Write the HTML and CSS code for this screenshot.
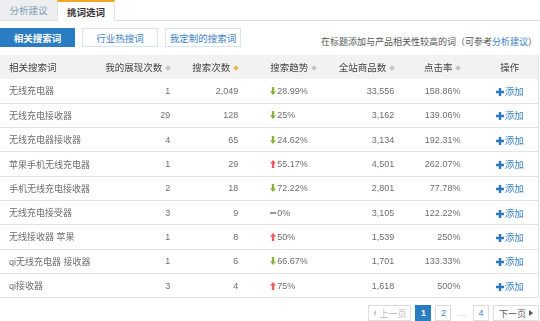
FILE: index.html
```html
<!DOCTYPE html>
<html lang="zh-CN">
<head>
  <meta charset="UTF-8" />
  <title>挑词选词</title>
  <link rel="stylesheet" href="styles.css">
</head>
<body>

  <!-- Tabs -->
  <div class="tabs">
    <div class="tab">分析建议</div>
    <div class="tab active">挑词选词</div>
  </div>

  <!-- Filter buttons -->
  <div class="toolbar">
    <div class="btn-group">
      <span class="btn btn-primary">相关搜索词</span>
      <span class="btn">行业热搜词</span>
      <span class="btn">我定制的搜索词</span>
    </div>
    <div class="hint">在标题添加与产品相关性较高的词（可参考<a class="link">分析建议</a>）</div>
  </div>

  <table class="word-table">
    <colgroup>
      <col style="width:100px">
      <col style="width:76px">
      <col style="width:68px">
      <col style="width:90px">
      <col style="width:66px">
      <col style="width:81px">
      <col style="width:57px">
    </colgroup>
    <thead>
      <tr>
        <th class="c-word">相关搜索词</th>
        <th class="c-num">我的展现次数<i class="sort"></i></th>
        <th class="c-num">搜索次数<i class="sort on"></i></th>
        <th class="c-trend">搜索趋势<i class="sort"></i></th>
        <th class="c-num">全站商品数<i class="sort"></i></th>
        <th class="c-rate">点击率<i class="sort"></i></th>
        <th class="c-op">操作</th>
      </tr>
    </thead>
    <tbody id="rows"></tbody>
  </table>

  <div class="pager">
    <span class="page disabled"><i class="tri tri-left"></i>上一页</span>
    <span class="page current">1</span>
    <span class="page">2</span>
    <span class="dots">...</span>
    <span class="page">4</span>
    <span class="page next">下一页<i class="tri tri-right"></i></span>
  </div>

  <script>
  document.addEventListener("DOMContentLoaded", () => {
    const rows = [
      ["无线充电器", "1", "2,049", "down", "28.99%", "33,556", "158.86%"],
      ["无线充电接收器", "29", "128", "down", "25%", "3,162", "139.06%"],
      ["无线充电器接收器", "4", "65", "down", "24.62%", "3,134", "192.31%"],
      ["苹果手机无线充电器", "1", "29", "up", "55.17%", "4,501", "262.07%"],
      ["手机无线充电接收器", "2", "18", "down", "72.22%", "2,801", "77.78%"],
      ["无线充电接受器", "3", "9", "flat", "0%", "3,105", "122.22%"],
      ["无线接收器 苹果", "1", "8", "up", "50%", "1,539", "250%"],
      ["qi无线充电器 接收器", "1", "6", "down", "66.67%", "1,701", "133.33%"],
      ["qi接收器", "3", "4", "up", "75%", "1,618", "500%"]
    ];

    const arrows = {
      up: '<svg class="arrow" width="6" height="8" viewBox="0 0 6 8"><path d="M3 0 L6 3.5 H4.2 V8 H1.8 V3.5 H0 Z" fill="#ef5b5b"/></svg>',
      down: '<svg class="arrow" width="6" height="8" viewBox="0 0 6 8"><path d="M3 8 L6 4.5 H4.2 V0 H1.8 V4.5 H0 Z" fill="#86b23e"/></svg>',
      flat: '<i class="flat"></i>'
    };

    const plus = '<svg class="plus" width="8" height="8" viewBox="0 0 8 8"><path d="M4 0 V8 M0 4 H8" stroke="#2c78c0" stroke-width="2.4"/></svg>';

    const tbody = document.getElementById("rows");
    tbody.innerHTML = rows.map(r => `
      <tr>
        <td class="c-word">${r[0]}</td>
        <td class="c-num">${r[1]}</td>
        <td class="c-num">${r[2]}</td>
        <td class="c-trend">${arrows[r[3]]}${r[4]}</td>
        <td class="c-num">${r[5]}</td>
        <td class="c-rate">${r[6]}</td>
        <td class="c-op"><a class="add">${plus}添加</a></td>
      </tr>`).join("");
  });
  </script>
</body>
</html>
```

FILE: styles.css
```css
:root {
  --blue: #2b7dc3;
  --link: #3a84c8;
  --text: #6e6e6e;
  --dark: #333333;
  --line: #e3e3e3;
  --head-bg: #f2f2f2;
  --orange: #f5a623;
}

* {
  box-sizing: border-box;
  margin: 0;
  padding: 0;
}

body {
  font-family: "Liberation Sans", "Noto Sans CJK SC", sans-serif;
  font-size: 9px;
  color: var(--text);
  background: #ffffff;
  width: 540px;
  -webkit-font-smoothing: antialiased;
}

/* Tabs */
.tabs {
  display: flex;
  height: 21px;
  border-bottom: 1px solid #dddddd;
}

.tab {
  width: 57px;
  display: flex;
  align-items: center;
  justify-content: center;
  background: #eceef0;
  color: #7f9cb6;
  font-size: 9.5px;
}

.tab.active {
  width: 58px;
  background: #ffffff;
  color: var(--dark);
  font-weight: bold;
  border-top: 2px solid var(--orange);
  border-left: 1px solid #e4e4e4;
  border-right: 1px solid #e4e4e4;
  margin-bottom: -1px;
  height: 21px;
}

/* Toolbar */
.toolbar {
  display: flex;
  align-items: center;
  justify-content: space-between;
  padding: 7px 3px 0 0;
  height: 34px;
}

.btn-group {
  display: flex;
  gap: 7px;
  align-self: flex-start;
}

.btn {
  width: 76px;
  height: 19px;
  display: flex;
  align-items: center;
  justify-content: center;
  border: 1px solid #d9e4ee;
  color: var(--link);
  font-size: 9.5px;
  background: #ffffff;
}

.btn-primary {
  width: 75px;
  background: var(--blue);
  border-color: var(--blue);
  color: #ffffff;
  font-weight: bold;
}

.hint {
  color: #555555;
}

.link {
  color: var(--link);
}

/* Table */
.word-table {
  width: 539px;
  border-collapse: collapse;
  table-layout: fixed;
  border-right: 1px solid var(--line);
  will-change: transform;
}

.word-table th {
  height: 24px;
  background: var(--head-bg);
  color: #444444;
  font-weight: normal;
  font-size: 9.5px;
  white-space: nowrap;
}

.word-table td {
  height: 24.3px;
  border-bottom: 1px solid var(--line);
  white-space: nowrap;
}

.c-word {
  text-align: left;
  padding-left: 9px;
}

.c-num {
  text-align: right;
  padding-right: 6px;
}

.c-trend {
  text-align: left;
  padding-left: 26px;
}

.c-rate {
  text-align: right;
  padding-right: 21px;
}

.c-op {
  text-align: center;
}

.sort {
  display: inline-block;
  width: 4px;
  height: 4px;
  margin-left: 4px;
  vertical-align: 1px;
  background: #c4c4c4;
  transform: rotate(45deg);
}

.sort.on {
  background: #f0b44c;
}

.arrow {
  vertical-align: -1px;
  margin-right: 1px;
}

.flat {
  display: inline-block;
  width: 6px;
  height: 2px;
  background: #999999;
  vertical-align: 2px;
  margin-right: 1px;
}

.add {
  color: var(--link);
  font-size: 9.5px;
}

.plus {
  vertical-align: -1px;
  margin-right: 1px;
}

/* Pager */
.pager {
  display: flex;
  justify-content: flex-end;
  align-items: center;
  gap: 4px;
  padding: 7px 1px 0 0;
}

.page {
  height: 16px;
  min-width: 16px;
  padding: 0 4px;
  display: flex;
  align-items: center;
  justify-content: center;
  border: 1px solid #dddddd;
  color: var(--link);
  background: #ffffff;
}

.page.disabled {
  width: 43px;
  color: #bbbbbb;
}

.page.current {
  background: var(--blue);
  border-color: var(--blue);
  color: #ffffff;
  font-weight: bold;
}

.page.next {
  width: 46px;
  color: #555555;
}

.dots {
  color: #cccccc;
  padding: 0 3px;
}

.tri {
  display: inline-block;
  width: 0;
  height: 0;
  border-top: 3px solid transparent;
  border-bottom: 3px solid transparent;
}

.tri-left {
  border-right: 3px solid #cccccc;
  margin-right: 3px;
}

.tri-right {
  border-left: 4px solid #555555;
  margin-left: 3px;
}
```
